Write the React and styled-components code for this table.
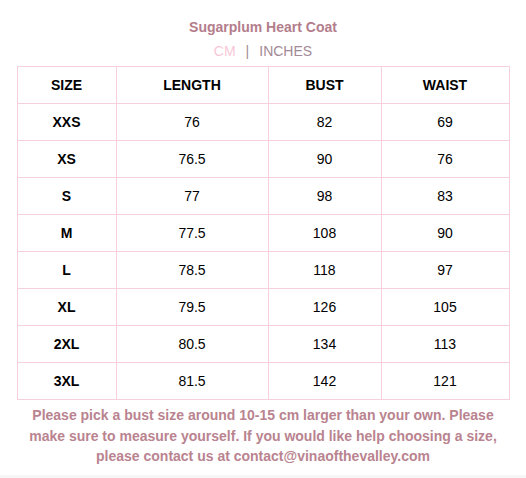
import React from "react";
import styled, { createGlobalStyle } from "styled-components";

const Global = createGlobalStyle`
  html, body { margin: 0; padding: 0; background: #f7f7f7; }
  body { font-family: "Liberation Sans", Arial, sans-serif; }
`;

const Page = styled.div`
  background: #ffffff;
  height: 475px;
  box-sizing: border-box;
  padding: 17px 17px 0 17px;
  display: flex;
  flex-direction: column;
  align-items: center;
`;

const Title = styled.h2`
  margin: 0;
  font-size: 14px;
  line-height: 20px;
  font-weight: bold;
  color: #b37d8c;
`;

const Units = styled.div`
  margin-top: 4px;
  font-size: 14px;
  line-height: 20px;
  display: flex;
  gap: 10px;
`;

const Unit = styled.span`
  color: ${(p) => (p.$active ? "#f8c8d8" : "#a38a96")};
`;

const Sep = styled.span`
  color: #a38a96;
`;

const Table = styled.table`
  margin-top: 5px;
  width: 492px;
  border-collapse: collapse;
  table-layout: fixed;
  font-size: 14px;
  color: #000;
`;

const Cell = styled.td`
  border: 1px solid #f7d0de;
  height: 36px;
  padding: 0;
  text-align: center;
  vertical-align: middle;
  font-weight: ${(p) => (p.$bold ? "bold" : "normal")};
`;

const Note = styled.p`
  margin: 5px 0 0 0;
  font-size: 14px;
  line-height: 20.5px;
  font-weight: bold;
  color: #b9838f;
  text-align: center;
  width: 470px;
`;

const headers = ["SIZE", "LENGTH", "BUST", "WAIST"];
const widths = [99, 152, 113, 128];
const rows = [
  ["XXS", "76", "82", "69"],
  ["XS", "76.5", "90", "76"],
  ["S", "77", "98", "83"],
  ["M", "77.5", "108", "90"],
  ["L", "78.5", "118", "97"],
  ["XL", "79.5", "126", "105"],
  ["2XL", "80.5", "134", "113"],
  ["3XL", "81.5", "142", "121"],
];

export default function App() {
  return (
    <>
      <Global />
      <Page>
        <Title>Sugarplum Heart Coat</Title>
        <Units>
          <Unit $active>CM</Unit>
          <Sep>|</Sep>
          <Unit>INCHES</Unit>
        </Units>
        <Table>
          <colgroup>
            {widths.map((w, i) => (
              <col key={i} style={{ width: w }} />
            ))}
          </colgroup>
          <tbody>
            <tr>
              {headers.map((h) => (
                <Cell key={h} $bold>
                  {h}
                </Cell>
              ))}
            </tr>
            {rows.map((r) => (
              <tr key={r[0]}>
                {r.map((v, i) => (
                  <Cell key={i} $bold={i === 0}>
                    {v}
                  </Cell>
                ))}
              </tr>
            ))}
          </tbody>
        </Table>
        <Note>
          Please pick a bust size around 10-15 cm larger than your own. Please
          make sure to measure yourself. If you would like help choosing a
          size, please contact us at contact@vinaofthevalley.com
        </Note>
      </Page>
    </>
  );
}
